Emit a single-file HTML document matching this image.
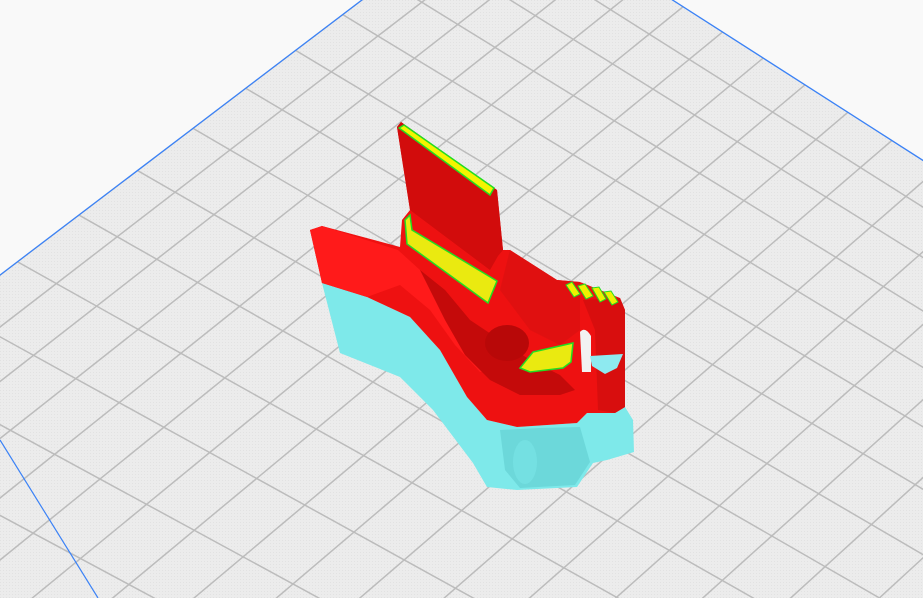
<!DOCTYPE html>
<html><head><meta charset="utf-8"><style>
html,body{margin:0;padding:0;background:#f9f9f9;overflow:hidden;width:923px;height:598px}
svg{display:block;overflow:hidden}
</style></head><body>
<svg id="s" width="923" height="598" viewBox="0 0 923 598" xmlns="http://www.w3.org/2000/svg">
<defs>
<pattern id="dots" width="3" height="3" patternUnits="userSpaceOnUse">
<rect width="3" height="3" fill="#ececec"/><rect width="1" height="1" fill="#e2e2e2"/>
</pattern>
<clipPath id="plate"><polygon points="504,-108 -300,503 -300,598 923,598 923,160"/></clipPath>
<clipPath id="frame"><rect width="923" height="598"/></clipPath>
</defs>
<g clip-path="url(#frame)">
<rect width="923" height="598" fill="#f9f9f9"/>
<polygon points="504,-108 -300,503 -300,598 923,598 923,160" fill="url(#dots)"/>
<g id="grid" clip-path="url(#plate)" stroke="#bcbcbc" stroke-width="1.5"></g>
<line x1="504" y1="-108" x2="-300" y2="503" stroke="#3b82f6" stroke-width="1.3"/>
<line x1="504" y1="-108" x2="1300" y2="402" stroke="#3b82f6" stroke-width="1.3"/>
<line x1="0" y1="440" x2="98" y2="598" stroke="#3b82f6" stroke-width="1.2"/>

<polygon fill="#7ee9ea" points="322,283 367,297 410,317 440,350 467,397 487,420 517,427 577,423 587,413 615,413 625,407 633,420 634,452 607,460 593,463 577,487 517,490 487,487 473,463 433,410 400,377 340,353"/>
<polygon fill="#6cd8da" points="500,430 540,428 580,427 590,462 575,485 520,488 505,470"/>
<ellipse cx="525" cy="462" rx="12" ry="22" fill="#74e0e2"/>
<polygon fill="#ee1111" points="310,230 322,226 400,247 402,220 410,210 397,127 401,122 497,190 503,250 510,250 557,280 580,282 620,298 625,310 625,407 615,413 587,413 577,423 517,427 487,420 467,397 440,350 410,317 367,297 322,283"/>
<polygon fill="#d20c0c" points="397,127 401,122 497,190 503,250 498,256 490,270 410,210"/>
<polygon fill="#ff1a1a" points="310,230 322,226 398,250 420,270 440,300 460,330 475,350 500,370 480,372 455,345 430,310 400,285 367,297 322,283"/>
<polygon fill="#c40a0a" points="420,270 445,290 470,320 500,340 530,360 560,375 575,390 560,395 520,395 490,380 465,355 445,320"/>
<ellipse cx="507" cy="343" rx="22" ry="18" fill="#b80808"/>
<polygon fill="#e01010" points="510,250 557,280 580,282 580,330 560,345 530,330 500,290"/>
<polygon fill="#d80e0e" points="583,300 620,298 625,310 625,407 615,413 598,410 595,330"/>
<polygon fill="#f4f400" stroke="#22dd22" stroke-width="1.5" points="399,128 404,125 494,188 490,195"/>
<polygon fill="#eaea10" stroke="#22dd22" stroke-width="1.5" points="405,220 410,215 412,230 497,281 488,303 407,244"/>
<polygon fill="#eaea10" stroke="#22dd22" stroke-width="1.5" points="533,352 573,343 571,362 563,368 530,372 520,368"/>
<g fill="#f0f000" stroke="#22dd22" stroke-width="1">
<polygon points="566,285 572,282 580,294 574,297"/>
<polygon points="578,286 585,284 593,296 586,299"/>
<polygon points="592,288 599,287 606,299 600,302"/>
<polygon points="604,292 611,291 618,302 612,305"/>
</g>
<path d="M580,332 Q585,326 591,336 L591,372 L582,372 Z" fill="#f2f2f2"/>
<polygon fill="#8eeaf0" points="590,356 623,354 617,368 605,374 592,366"/>
</g>
</svg>
<script>
(function(){
var g=document.getElementById('grid');
function L(x1,y1,x2,y2){var e=document.createElementNS('http://www.w3.org/2000/svg','line');
e.setAttribute('x1',x1);e.setAttribute('y1',y1);e.setAttribute('x2',x2);e.setAttribute('y2',y2);g.appendChild(e);}
var y=-47;
for(var k=0;k<20;k++){var s=Math.max(0.5,0.64-0.008*k); L(-50,y-650*s,1000,y+400*s); y+=50+3*k;}
var yb=-257;
for(var j=0;j<30;j++){var s2=Math.max(-1.0,-0.76-0.01*j); L(-50,yb-750*s2,1000,yb+300*s2); yb+=45+2.5*j;}
})();
</script>
</body></html>
